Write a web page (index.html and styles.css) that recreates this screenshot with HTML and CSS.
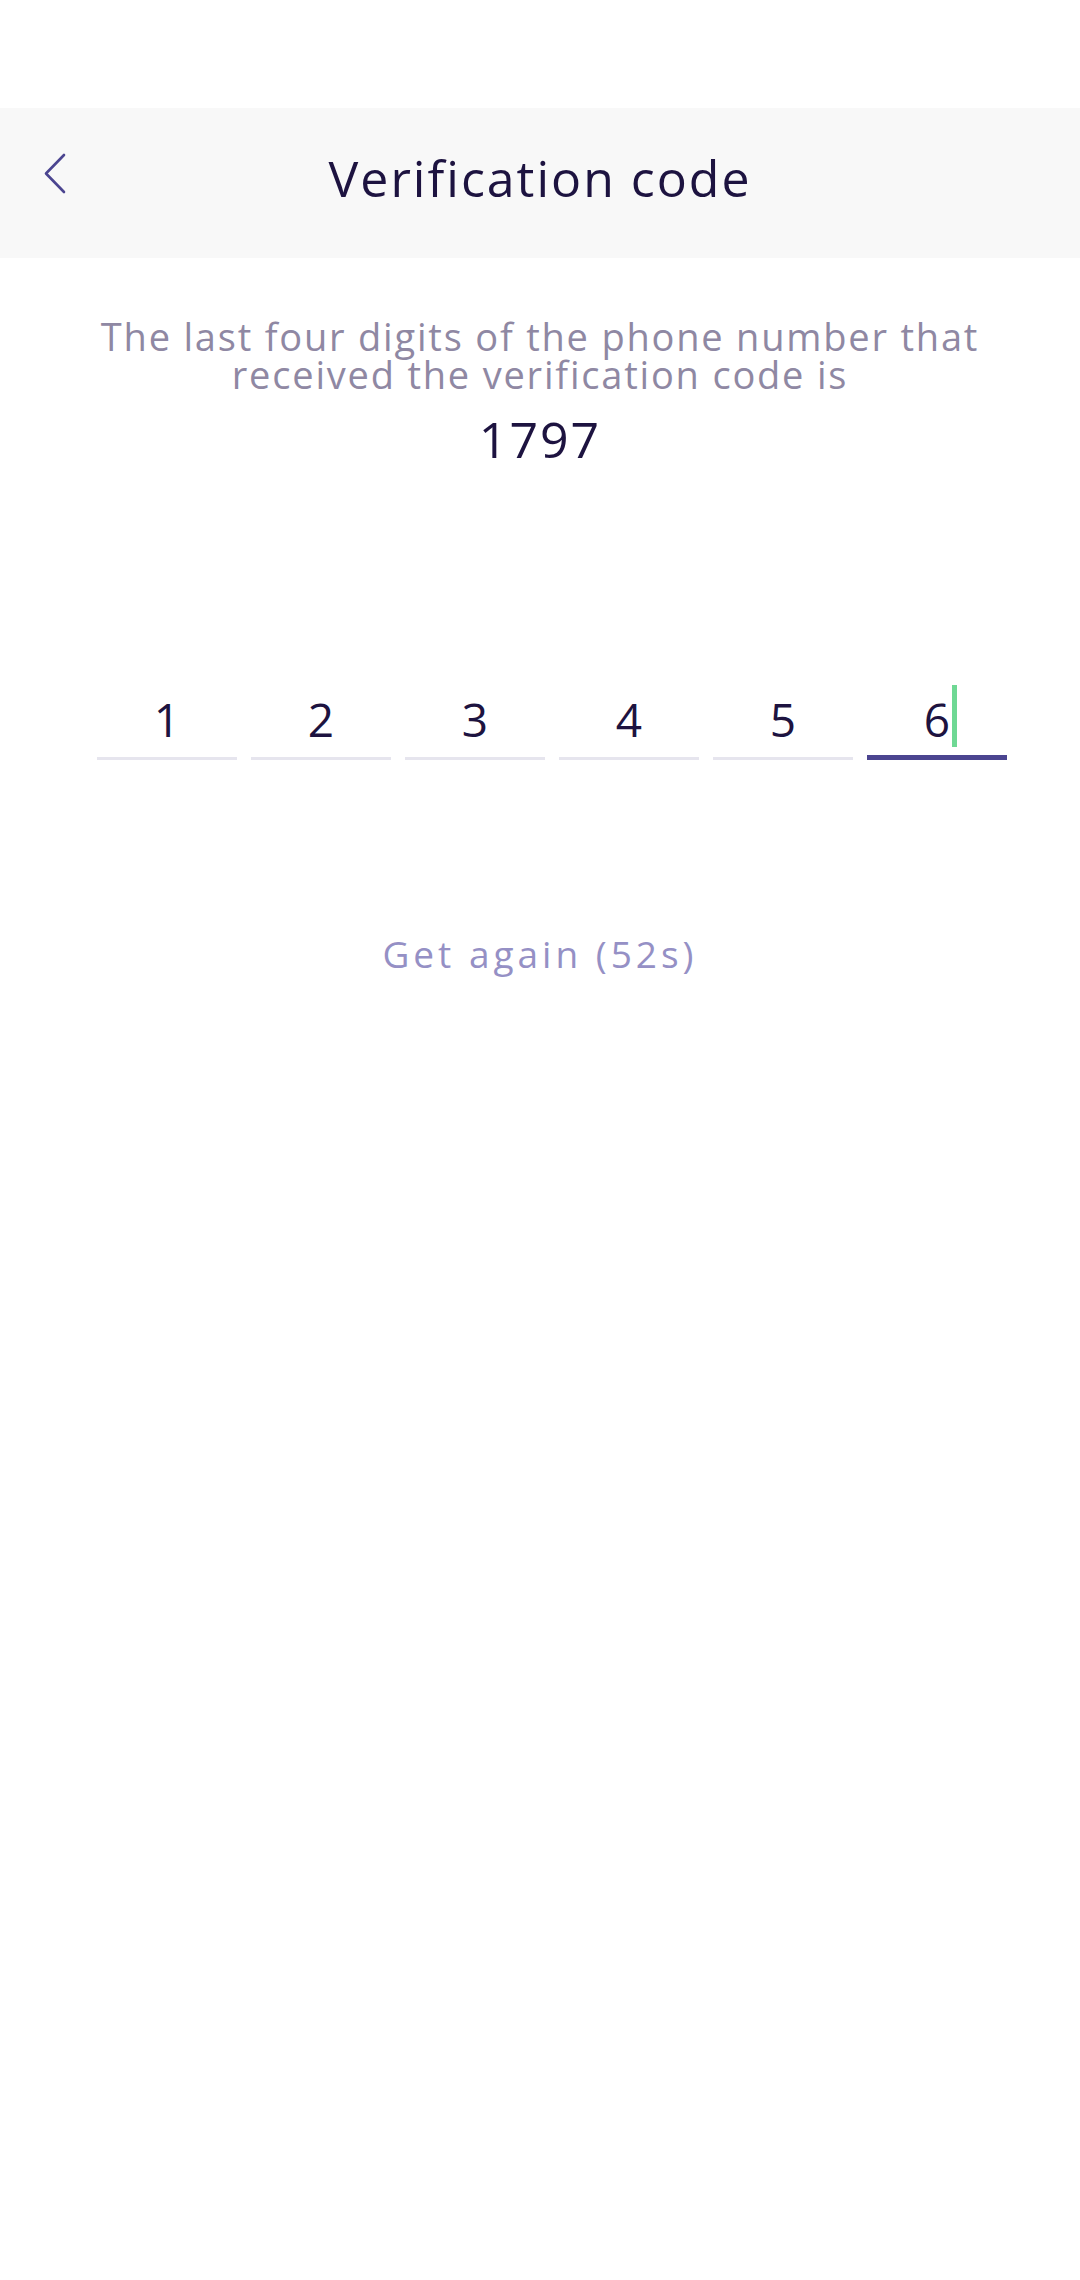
FILE: index.html
```html
<!DOCTYPE html>
<html lang="en">
<head>
<meta charset="utf-8">
<title>Verification code</title>
<link rel="stylesheet" href="styles.css">
</head>
<body>
<div class="status"></div>
<header class="topbar">
  <div class="back">
    <svg width="30" height="44" viewBox="0 0 30 44"><polyline points="20,3 2,21.5 20,40" fill="none" stroke="#4b4590" stroke-width="2.6" stroke-linecap="round" stroke-linejoin="round"/></svg>
  </div>
  <h1 class="title">Verification code</h1>
  <div></div>
</header>
<main class="content">
  <p class="desc">The last four digits of the phone number that received the verification code is</p>
  <p class="phone">1797</p>
  <div class="code">
    <div class="cell">1</div>
    <div class="cell">2</div>
    <div class="cell">3</div>
    <div class="cell">4</div>
    <div class="cell">5</div>
    <div class="cell active"><span class="digit">6<span class="caret"></span></span></div>
  </div>
  <p class="again">Get again (52s)</p>
</main>
</body>
</html>
```
FILE: styles.css
```css
html, body {
  margin: 0;
  padding: 0;
  background: #ffffff;
}
body {
  width: 1080px;
  height: 2280px;
  font-family: "Open Sans", "Noto Sans", sans-serif;
  color: #1d1340;
}
.status {
  height: 108px;
}
.topbar {
  height: 150px;
  background: #f8f8f8;
  display: grid;
  grid-template-columns: 1fr auto 1fr;
  align-items: center;
  box-sizing: border-box;
  padding-bottom: 11px;
}
.back {
  padding-left: 44px;
  display: flex;
  align-items: center;
  margin-bottom: 7px;
}
.back svg {
  display: block;
}
.title {
  margin: 0;
  font-size: 50px;
  font-weight: 400;
  line-height: 60px;
  letter-spacing: 2px;
  color: #1d1340;
}
.content {
  display: flex;
  flex-direction: column;
  align-items: center;
}
.desc {
  margin: 59px 0 0;
  width: 910px;
  text-align: center;
  font-size: 38px;
  line-height: 38px;
  letter-spacing: 1.8px;
  color: #8f88a3;
}
.phone {
  margin: 16px 0 0;
  font-size: 50px;
  line-height: 60px;
  letter-spacing: 2px;
  color: #1d1340;
}
.code {
  margin: 220px 0 0;
  align-self: flex-start;
  margin-left: 97px;
  display: flex;
  gap: 14px;
}
.cell {
  width: 140px;
  height: 60px;
  padding-bottom: 8px;
  border-bottom: 3px solid #e6e5ee;
  text-align: center;
  font-size: 46px;
  line-height: 60px;
  color: #1d1340;
}
.cell.active {
  padding-bottom: 6px;
  border-bottom: 5px solid #4b4590;
}
.digit {
  position: relative;
}
.caret {
  position: absolute;
  left: calc(100% + 2px);
  top: -3px;
  width: 5px;
  height: 62px;
  background: #6fd894;
}
.again {
  margin: 169px 0 0;
  font-size: 37px;
  line-height: 50px;
  letter-spacing: 4px;
  color: #9590c5;
}
```
